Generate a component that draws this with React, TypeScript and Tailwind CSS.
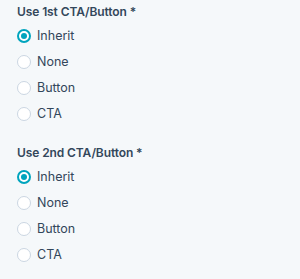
import React from "react";

const options = ["Inherit", "None", "Button", "CTA"];

function Radio({ checked, label }: { checked: boolean; label: string }) {
  return (
    <div className="flex h-[26px] items-center">
      <span
        className={
          checked
            ? "flex h-[14px] w-[14px] items-center justify-center rounded-full border-2 border-[#00a4bd] bg-white"
            : "flex h-[14px] w-[14px] items-center justify-center rounded-full border border-[#cbd6e2] bg-white"
        }
      >
        {checked && <span className="h-[6px] w-[6px] rounded-full bg-[#00a4bd]" />}
      </span>
      <span className="ml-[6px] text-[12.5px] leading-[18px] text-[#33475b]">{label}</span>
    </div>
  );
}

function Group({ title, first }: { title: string; first?: boolean }) {
  return (
    <div className={first ? "pt-[3px]" : "pt-[17px]"}>
      <div className="text-[12px] font-semibold leading-[18px] tracking-[-0.1px] text-[#33475b]">{title}</div>
      <div className="mt-[2px] flex flex-col">
        {options.map((o, i) => (
          <Radio key={o} checked={i === 0} label={o} />
        ))}
      </div>
    </div>
  );
}

export default function App() {
  return (
    <div
      className="h-[279px] w-[300px] bg-[#f5f8fa] pl-[17px]"
      style={{ fontFamily: "Inter, 'Noto Sans', sans-serif" }}
    >
      <Group title="Use 1st CTA/Button *" first />
      <Group title="Use 2nd CTA/Button *" />
    </div>
  );
}
